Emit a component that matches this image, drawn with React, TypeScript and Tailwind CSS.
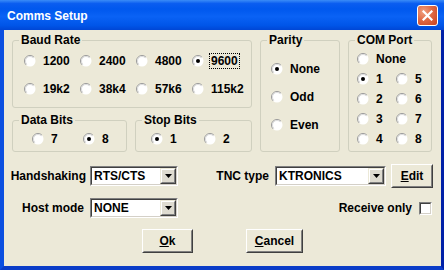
import React from 'react';

function Radio({ checked }: { checked?: boolean }) {
  return (
    <svg width="12" height="12" viewBox="0 0 12 12" className="shrink-0">
      <circle cx="6" cy="6" r="5.5" fill="#fff" />
      <path d="M9.9 2.1A5.5 5.5 0 0 0 2.1 9.9" stroke="#9a9a9a" strokeWidth="1" fill="none" />
      <path d="M9.2 2.8A4.5 4.5 0 0 0 2.8 9.2" stroke="#dcdcdc" strokeWidth="1" fill="none" />
      {checked && <circle cx="6" cy="6" r="2" fill="#000" />}
    </svg>
  );
}

function Option({ label, checked, focus }: { label: string; checked?: boolean; focus?: boolean }) {
  return (
    <div className="flex h-[16px] items-center gap-[5px]">
      <Radio checked={checked} />
      <span
        className={`border px-[1px] leading-[14px] ${focus ? 'border-dotted border-black' : 'border-transparent'}`}
      >
        {label}
      </span>
    </div>
  );
}

function Group({ title, className, children }: { title: string; className?: string; children: React.ReactNode }) {
  return (
    <fieldset className={`rounded-[3px] border border-[#d0d0bf] ${className ?? ''}`}>
      <legend className="ml-[6px] px-[2px] leading-[14px]">{title}</legend>
      {children}
    </fieldset>
  );
}

function Combo({ value, className }: { value: string; className: string }) {
  return (
    <div className={`flex h-[20px] border border-[#808080] border-r-white border-b-white ${className}`}>
      <div className="flex flex-1 border border-[#404040] border-r-[#d4d0c8] border-b-[#d4d0c8] bg-white">
        <span className="flex-1 pl-[2px] leading-[16px]">{value}</span>
        <div className="flex w-[16px] border border-[#ece9d8] border-r-[#404040] border-b-[#404040]">
          <div className="flex flex-1 items-center justify-center border border-white border-r-[#808080] border-b-[#808080] bg-[#dedbd0]">
            <svg width="7" height="4" viewBox="0 0 7 4">
              <polygon points="0,0 7,0 3.5,4" fill="#000" />
            </svg>
          </div>
        </div>
      </div>
    </div>
  );
}

function Btn({ className, children }: { className: string; children: React.ReactNode }) {
  return (
    <div className={`flex h-[24px] border border-white border-r-[#404040] border-b-[#404040] ${className}`}>
      <div className="flex flex-1 items-center justify-center border border-[#ece9d8] border-r-[#808080] border-b-[#808080] bg-[#ece9d8]">
        {children}
      </div>
    </div>
  );
}

export default function App() {
  return (
    <div className="flex h-[270px] w-[444px] flex-col font-['Liberation_Sans',Arial,sans-serif] text-[12px] font-bold text-black">
      {/* title bar */}
      <div className="flex h-[30px] items-center justify-between bg-[linear-gradient(180deg,#3a8cf7_0%,#0a5df0_12%,#0058ee_30%,#0a62f5_55%,#0055e8_85%,#0046d5_100%)] pr-[6px] pl-[7px]">
        <span className="pt-[1px] text-[12px] text-white">Comms Setup</span>
        <div className="flex h-[21px] w-[21px] items-center justify-center rounded-[3px] border border-white bg-[radial-gradient(circle_at_30%_30%,#f0a080_0%,#e06a45_45%,#c8401e_100%)]">
          <svg width="11" height="11" viewBox="0 0 11 11">
            <path d="M1.5 1.5L9.5 9.5M9.5 1.5L1.5 9.5" stroke="#fff" strokeWidth="2.2" strokeLinecap="square" />
          </svg>
        </div>
      </div>

      {/* client */}
      <div className="flex flex-1 flex-col border-b-4 border-l-4 border-r-[3px] border-b-[#0a3cc8] border-l-[#0b4fe0] border-r-[#0020a8] bg-[#ece9d8]">
        <div className="flex gap-[8px] pt-[3px] pl-[8px]">
          <div className="flex w-[240px] flex-col gap-[5px]">
            <Group title="Baud Rate">
              <div className="grid grid-cols-[56px_56px_56px_56px] gap-y-[12px] pt-[6px] pb-[10px] pl-[11px]">
                <Option label="1200" />
                <Option label="2400" />
                <Option label="4800" />
                <Option label="9600" checked focus />
                <Option label="19k2" />
                <Option label="38k4" />
                <Option label="57k6" />
                <Option label="115k2" />
              </div>
            </Group>
            <div className="flex gap-[8px]">
              <Group title="Data Bits" className="w-[115px]">
                <div className="flex pt-[4px] pb-[4px] pl-[19px]">
                  <div className="w-[51px]">
                    <Option label="7" />
                  </div>
                  <Option label="8" checked />
                </div>
              </Group>
              <Group title="Stop Bits" className="w-[117px]">
                <div className="flex pt-[4px] pb-[4px] pl-[15px]">
                  <div className="w-[53px]">
                    <Option label="1" checked />
                  </div>
                  <Option label="2" />
                </div>
              </Group>
            </div>
          </div>

          <Group title="Parity" className="w-[80px]">
            <div className="flex flex-col gap-[12px] pt-[14px] pl-[10px]">
              <Option label="None" checked />
              <Option label="Odd" />
              <Option label="Even" />
            </div>
          </Group>

          <Group title="COM Port" className="w-[84px]">
            <div className="flex flex-col gap-[4px] pt-[4px] pl-[8px]">
              <Option label="None" />
              <div className="grid grid-cols-[39px_auto] gap-y-[4px]">
                <Option label="1" checked />
                <Option label="5" />
                <Option label="2" />
                <Option label="6" />
                <Option label="3" />
                <Option label="7" />
                <Option label="4" />
                <Option label="8" />
              </div>
            </div>
          </Group>
        </div>

        <div className="mt-[14px] flex h-[20px] items-center pr-[8px]">
          <div className="w-[82px] text-right">Handshaking</div>
          <Combo value="RTS/CTS" className="ml-[4px] w-[88px]" />
          <div className="flex-1" />
          <span>TNC type</span>
          <Combo value="KTRONICS" className="ml-[6px] w-[111px]" />
          <Btn className="ml-[5px] w-[42px]">
            <span>
              <span className="underline">E</span>dit
            </span>
          </Btn>
        </div>

        <div className="mt-[12px] flex h-[20px] items-center pr-[9px]">
          <div className="w-[80px] text-right">Host mode</div>
          <Combo value="NONE" className="ml-[6px] w-[88px]" />
          <div className="flex-1" />
          <span>Receive only</span>
          <div className="ml-[7px] flex h-[13px] w-[13px] border border-[#808080] border-r-white border-b-white">
            <div className="flex-1 border border-[#404040] border-r-[#d4d0c8] border-b-[#d4d0c8] bg-white" />
          </div>
        </div>

        <div className="mt-[11px] flex justify-center gap-[53px]">
          <Btn className="w-[51px]">
            <span>
              <span className="underline">O</span>k
            </span>
          </Btn>
          <Btn className="w-[57px]">
            <span>
              <span className="underline">C</span>ancel
            </span>
          </Btn>
        </div>
      </div>
    </div>
  );
}
